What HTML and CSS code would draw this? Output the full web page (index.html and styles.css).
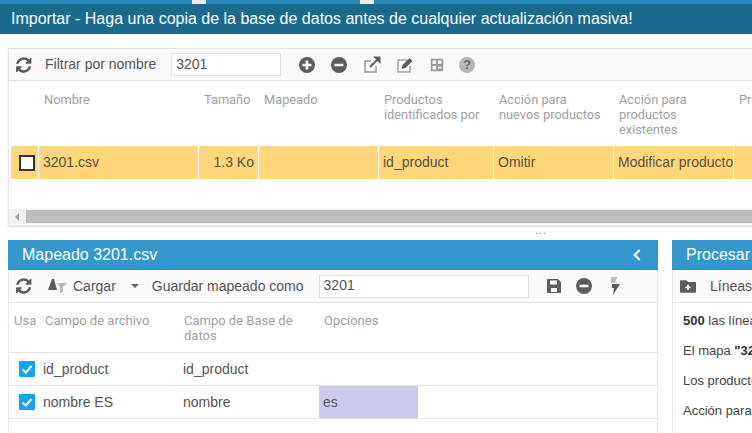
FILE: index.html
```html
<!DOCTYPE html>
<html lang="es">
<head>
<meta charset="utf-8">
<title>Importar</title>
<link rel="stylesheet" href="styles.css">
</head>
<body>
<svg class="defs" width="0" height="0">
  <defs>
    <symbol id="i-refresh" viewBox="0 0 1792 1792"><path d="M1511 1056q0 5-1 7-64 268-268 434.5t-478 166.5q-146 0-282.5-55t-243.5-157l-129 129q-19 19-45 19t-45-19-19-45v-448q0-26 19-45t45-19h448q26 0 45 19t19 45-19 45l-137 137q71 66 161 102t187 36q134 0 250-65t186-179q11-17 53-117 8-23 30-23h192q13 0 22.5 9.5t9.5 22.5zm25-800v448q0 26-19 45t-45 19h-448q-26 0-45-19t-19-45 19-45l138-138q-148-137-349-137-134 0-250 65t-186 179q-11 17-53 117-8 23-30 23h-199q-13 0-22.5-9.5t-9.5-22.5v-7q65-268 270-434.5t480-166.5q146 0 284 55.5t245 156.5l130-129q19-19 45-19t45 19 19 45z"/></symbol>
    <symbol id="i-plus" viewBox="0 0 16 16"><path fill-rule="evenodd" d="M8 0a8 8 0 1 1 0 16A8 8 0 0 1 8 0zM6.700 3.500v3.200H3.500v2.600h3.200v3.200h2.600V9.300h3.200V6.700H9.300V3.500z"/></symbol>
    <symbol id="i-minus" viewBox="0 0 16 16"><path fill-rule="evenodd" d="M8 0a8 8 0 1 1 0 16A8 8 0 0 1 8 0zM3.500 6.700v2.600h9V6.700z"/></symbol>
  </defs>
</svg>

<div class="strip">
  <span class="strip-tab first"></span>
  <span class="strip-tab second"></span>
</div>
<div class="banner">Importar - Haga una copia de la base de datos antes de cualquier actualización masiva!</div>

<section class="files">
  <div class="toolbar files-bar">
    <svg class="ic refresh"><use href="#i-refresh"/></svg>
    <span class="bar-label">Filtrar por nombre</span>
    <input class="field filter" value="3201">
    <span class="bar-icons">
      <svg class="ic round"><use href="#i-plus"/></svg>
      <svg class="ic round"><use href="#i-minus"/></svg>
      <svg class="ic tool" viewBox="0 0 18 18"><path class="line" d="M13 10v6H2V5h6"/><path class="line heavy" d="M7 11 15 3"/><path d="M10 0.500H17.500V8z"/></svg>
      <svg class="ic tool" viewBox="0 0 18 18"><path class="line pale" d="M14 10v6H2V4h9"/><path d="m5.500 13 1-4L13.500 2l3 3-7 7z"/></svg>
      <svg class="ic tool-grid pale-fill" viewBox="0 0 18 18"><path fill-rule="evenodd" d="M2 2h14v14H2zM4 4v4h4V4zM4 10v4h4v-4zM10 4v4h4V4zM10 11v2h4v-2z"/></svg>
      <span class="help">?</span>
    </span>
  </div>
  <div class="grid file-head">
    <span></span><span>Nombre</span><span>Tamaño</span><span>Mapeado</span>
    <span>Productos identificados por</span><span>Acción para nuevos productos</span>
    <span>Acción para productos existentes</span><span>Procesar</span>
  </div>
  <div class="grid file-row">
    <span class="cell check-cell"><i class="box"></i></span>
    <span class="cell">3201.csv</span>
    <span class="cell right">1.3 Ko</span>
    <span class="cell"></span>
    <span class="cell">id_product</span>
    <span class="cell">Omitir</span>
    <span class="cell">Modificar producto</span>
    <span class="cell"></span>
  </div>
  <div class="scrollbar">
    <span class="scroll-arrow"></span>
    <span class="scroll-thumb"></span>
  </div>
</section>

<div class="splitter">...</div>

<div class="lower">
  <section class="panel mapping">
    <header class="panel-title"><span>Mapeado 3201.csv</span><span class="chev"></span></header>
    <div class="toolbar map-bar">
      <svg class="ic refresh"><use href="#i-refresh"/></svg>
      <svg class="ic load" viewBox="0 0 20 16"><path d="M1 12 5 1h2l3 11z"/><path class="faint" d="M10 5h10l-4 4v5l-3 1V9z"/></svg>
      <span class="bar-label load-label">Cargar</span>
      <span class="caret"></span>
      <span class="bar-label save-label">Guardar mapeado como</span>
      <input class="field map-name" value="3201">
      <span class="map-icons">
        <svg class="ic round" viewBox="0 0 16 16"><path fill-rule="evenodd" d="M1.500 1H12l3 3v10.500a.5.5 0 0 1-.5.5h-13a.5.5 0 0 1-.5-.5v-13a.5.5 0 0 1 .5-.5zM4 2.500v4h7v-4zM5 10v4h6v-4z"/></svg>
        <svg class="ic round"><use href="#i-minus"/></svg>
        <svg class="ic bolt" viewBox="0 0 12 18"><path class="faint" d="M3 0h6L7 6H3z"/><path d="M4 7h8L5 18l1-7H4z"/></svg>
      </span>
    </div>
    <div class="map-grid map-head">
      <span>Usa</span><span>Campo de archivo</span><span>Campo de Base de datos</span><span>Opciones</span><span></span>
    </div>
    <div class="map-grid map-row">
      <span class="check-wrap"><svg class="tick" viewBox="0 0 16 16"><path d="M3.500 8.500 6.800 11.500 12.500 5"/></svg></span>
      <span>id_product</span><span>id_product</span><span></span><span></span>
    </div>
    <div class="map-grid map-row">
      <span class="check-wrap"><svg class="tick" viewBox="0 0 16 16"><path d="M3.500 8.500 6.800 11.500 12.500 5"/></svg></span>
      <span>nombre ES</span><span>nombre</span><span class="lang">es</span><span></span>
    </div>
  </section>

  <section class="panel process">
    <header class="panel-title"><span class="nowrap">Procesar 3201.csv</span></header>
    <div class="toolbar proc-bar">
      <svg class="ic folder" viewBox="0 0 18 14"><path fill-rule="evenodd" d="M1 0h6l2 2h8a1 1 0 0 1 1 1v10a1 1 0 0 1-1 1H1a1 1 0 0 1-1-1V1a1 1 0 0 1 1-1zm7 5v2H6v2h2v2h2V9h2V7h-2V5z"/></svg>
      <span class="bar-label nowrap">Líneas</span>
    </div>
    <div class="proc-body">
      <p><b>500</b> las líneas serán importadas</p>
      <p>El mapa <b>"3201"</b> será utilizado</p>
      <p>Los productos se identifican por id_product</p>
      <p>Acción para nuevos productos</p>
    </div>
  </section>
</div>
</body>
</html>
```

FILE: styles.css
```css
* { box-sizing: border-box; }
html, body { margin: 0; padding: 0; height: 433px; overflow: hidden; background: #fff; }
body { width: 752px; font-family: "Liberation Sans", Arial, sans-serif; font-size: 14px; color: #555; }
.defs { display: block; height: 0; }

.strip { height: 4px; background: #2b88bb; display: flex; }
.strip-tab { width: 14px; height: 4px; background: #e8eef2; }
.strip-tab.first { margin-left: 192px; }
.strip-tab.second { margin-left: 154px; }

.banner { height: 30px; padding: 0 11px; background: #1a6a8e; color: #fff; font-size: 16px; line-height: 29px; white-space: nowrap; }

.files { margin: 14px 0 0 8px; width: 760px; height: 178px; border: 1px solid #e6e6e6; border-right: 0; box-shadow: 0 1px 2px #e4e4e4; }
.toolbar { display: flex; align-items: center; background: #fafafa; border-bottom: 1px solid #e4e4e4; }
.files-bar { height: 32px; padding-left: 7px; }
.ic { display: block; fill: #5c5c5c; flex: none; }
.refresh { width: 18px; height: 18px; }
.round { width: 16px; height: 16px; }
.tool { width: 18px; height: 18px; margin-right: -1px; }
.tool-grid { width: 16px; height: 16px; }
.pale-fill { fill: #9c9c9c; }
.line { fill: none; stroke: #9a9a9a; stroke-width: 1.5; }
.heavy { stroke: #5c5c5c; stroke-width: 2; }
.pale { stroke: #a5a5a5; }
.faint { fill: #bbb; }
.bar-label { white-space: nowrap; color: #555; padding-bottom: 1px; }
.files-bar .bar-label { margin-left: 11px; }
.field { height: 23px; border: 1px solid #e2e2e2; background: #fff; padding: 0 4px 2px; font: 14px "Liberation Sans", Arial, sans-serif; color: #555; outline: 0; }
.filter { width: 110px; margin-left: 15px; }
.bar-icons { display: flex; align-items: center; gap: 16px; margin-left: 18px; }
.help { width: 16px; height: 16px; margin-left: -2px; border-radius: 50%; background: #b5b5b5; color: #6e6e6e; font-size: 13px; font-weight: 700; line-height: 16px; text-align: center; }

.grid { display: grid; grid-template-columns: 27px 159px 59px 119px 114px 119px 119px 40px; column-gap: 1px; margin-left: 2px; }
.file-head { height: 65px; padding-top: 11px; font: 12.8px/15px Roboto, sans-serif; color: #a0a0a0; }
.file-head span { padding: 0 10px 0 5px; white-space: normal; }
.file-row { height: 33px; }
.cell { background: #ffd67a; padding-left: 4px; line-height: 33px; white-space: nowrap; color: #5a5342; }
.right { text-align: right; padding: 0 4px 0 0; }
.check-cell { display: flex; align-items: center; justify-content: flex-end; padding: 0 3px 0 0; }
.box { width: 16px; height: 16px; border: 2px solid #333; background: #fff; }

.scrollbar { display: flex; height: 15px; margin-top: 30px; background: #f1f1f1; }
.scroll-arrow { width: 17px; position: relative; }
.scroll-arrow::before { content: ""; position: absolute; left: 6px; top: 4px; border: 4px solid transparent; border-left-width: 0; border-right: 4px solid #a3a3a3; }
.scroll-thumb { flex: 1; background: #bdbdbd; margin-top: 1px; margin-bottom: 1px; }

.splitter { height: 14px; text-align: center; margin-left: 330px; font-size: 11px; line-height: 9px; color: #888; letter-spacing: 1px; }

.lower { display: flex; gap: 14px; margin-left: 8px; width: 760px; }
.panel { border-left: 1px solid #e8e8e8; border-right: 1px solid #e8e8e8; height: 193px; flex: none; }
.mapping { width: 650px; }
.process { width: 300px; }
.panel-title { height: 30px; margin: 0 -1px; display: flex; align-items: center; justify-content: space-between; padding: 1px 14px 0; background: #3498cf; color: #fff; font-size: 16px; border-bottom: 1px solid #2b8fc6; }
.nowrap { white-space: nowrap; }
.chev { width: 8px; height: 8px; margin-right: 1px; border-left: 2px solid #fff; border-bottom: 2px solid #fff; transform: rotate(45deg); }

.map-bar { height: 33px; padding-left: 7px; }
.load { width: 20px; height: 16px; margin-left: 13px; }
.load-label { margin-left: 6px; }
.caret { margin-left: 15px; border: 4px solid transparent; border-top-color: #666; border-bottom: 0; }
.save-label { margin-left: 13px; }
.map-name { width: 210px; margin-left: 15px; }
.map-icons { display: flex; align-items: center; gap: 14px; margin-left: 17px; }
.bolt { width: 12px; height: 18px; margin-left: 2px; }

.map-grid { display: grid; grid-template-columns: 31px 139px 140px 99px 1fr; border-bottom: 1px solid #e2e2e2; }
.map-head { height: 50px; padding-top: 10px; font: 13px/15px Roboto, sans-serif; color: #a0a0a0; }
.map-head span { padding-left: 5px; }
.map-row { height: 33px; line-height: 32px; }
.map-row span:nth-child(2) { padding-left: 3px; }
.map-row span:nth-child(3) { padding-left: 4px; }
.lang { background: #cbcaec; padding-left: 4px; }
.check-wrap { display: flex; align-items: center; justify-content: flex-end; }
.tick { width: 16px; height: 16px; background: #15a2f2; border-radius: 1px; margin-right: 5px; fill: none; stroke: #fff; stroke-width: 2; }

.proc-bar { height: 33px; padding-left: 7px; }
.folder { width: 16px; height: 13px; }
.proc-bar .bar-label { margin-left: 14px; }
.proc-body { padding: 3px 10px 0; font-size: 13px; color: #444; white-space: nowrap; }
.proc-body p { margin: 0; height: 30px; line-height: 30px; }
.proc-body b { color: #333; }
```
